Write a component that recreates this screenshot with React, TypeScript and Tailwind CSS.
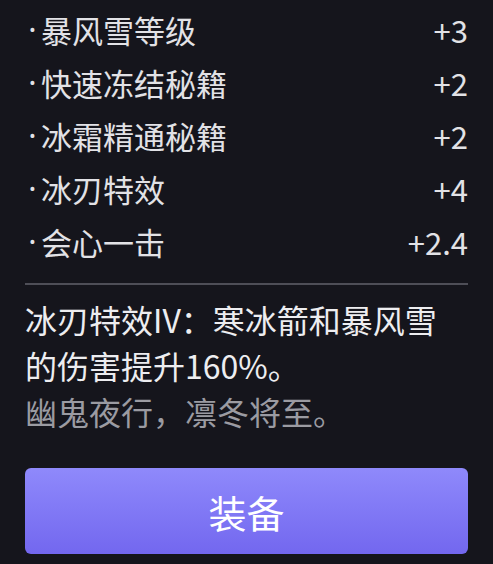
const stats = [
  { name: "暴风雪等级", value: "+3" },
  { name: "快速冻结秘籍", value: "+2" },
  { name: "冰霜精通秘籍", value: "+2" },
  { name: "冰刃特效", value: "+4" },
  { name: "会心一击", value: "+2.4" },
];

export default function App() {
  return (
    <div
      className="min-h-[564px] w-full bg-[#15151c] px-[25px] pt-[3px] pb-[10px] text-[31px] text-[#e2e2e6]"
      style={{ fontFamily: '"Noto Sans CJK SC", "Noto Sans", sans-serif' }}
    >
      <ul>
        {stats.map((s) => (
          <li key={s.name} className="flex h-[53px] items-center justify-between leading-none">
            <span className="flex items-center">
              <span className="-ml-[1px] w-[17px] text-center font-['Noto_Sans',sans-serif]">·</span>
              <span>{s.name}</span>
            </span>
            <span>{s.value}</span>
          </li>
        ))}
      </ul>

      <div className="mt-[15px] h-[2px] bg-[#4e4e57]" />

      <div className="mt-[11px] text-[32px] leading-[46px]">
        <p className="text-[#ededf0]">
          冰刃特效IV：寒冰箭和暴风雪
          <br />
          的伤害提升160%。
        </p>
        <p className="text-[#9b9ba2]">幽鬼夜行，凛冬将至。</p>
      </div>

      <button className="mt-[34px] flex h-[86px] w-full items-center justify-center rounded-[6px] bg-gradient-to-b from-[#8f89fb] to-[#7367ef] text-[38px] text-white">
        装备
      </button>
    </div>
  );
}
